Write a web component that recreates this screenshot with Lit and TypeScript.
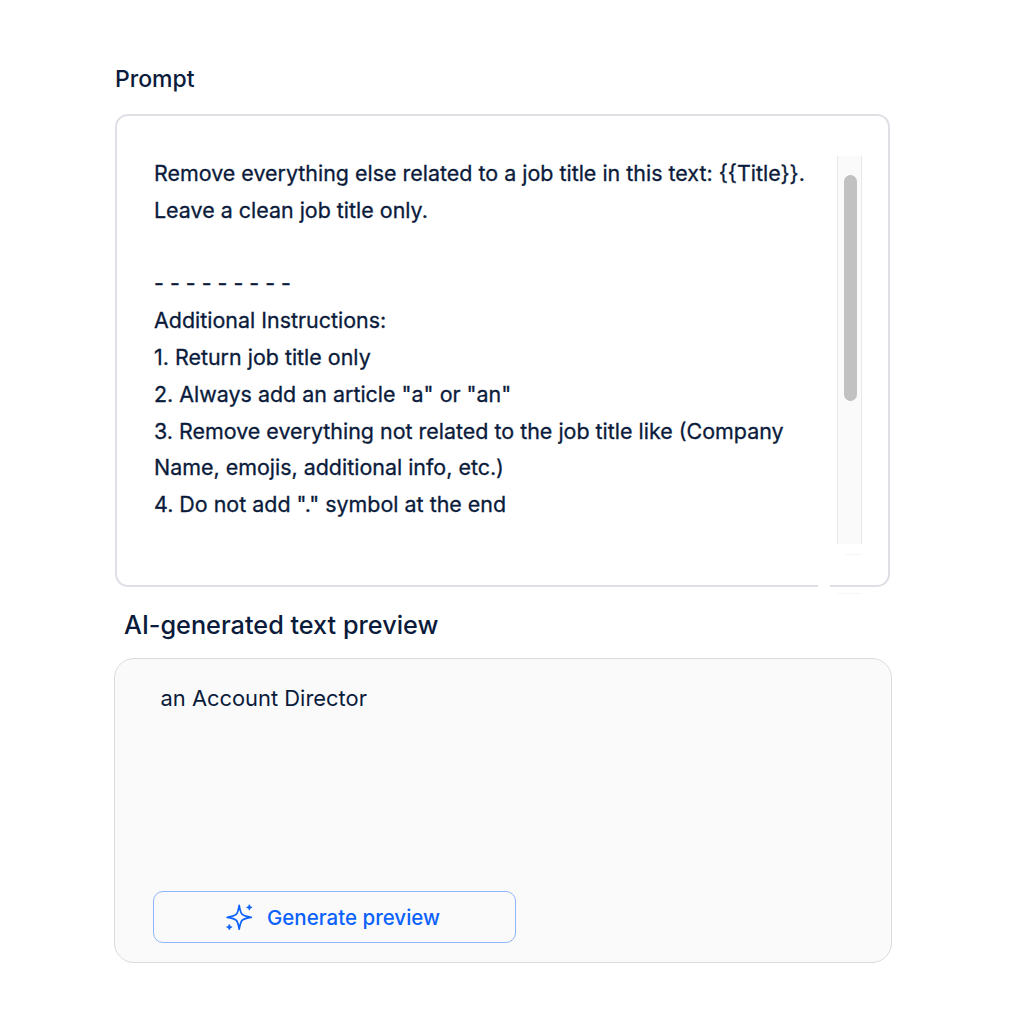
import { LitElement, html, css, svg } from "lit";
import { customElement } from "lit/decorators.js";

const LINES: string[] = [
  "Remove everything else related to a job title in this text: {{Title}}.",
  "Leave a clean job title only.",
  "",
  "- - - - - - - - -",
  "Additional Instructions:",
  "1. Return job title only",
  "2. Always add an article \"a\" or \"an\"",
  "3. Remove everything not related to the job title like (Company",
  "Name, emojis, additional info, etc.)",
  "4. Do not add \".\" symbol at the end",
];

const sparkles = svg`
  <path d="M13.2 1.4C13.9 5.6 14.5 8.4 16 10.2C17.7 11.9 20.6 12.7 25.2 13.3C20.6 13.9 17.7 14.7 16 16.4C14.5 18.2 13.9 21 13.2 25.2C12.5 21 11.9 18.2 10.4 16.4C8.7 14.7 5.8 13.9 1.2 13.3C5.8 12.7 8.7 11.9 10.4 10.2C11.9 8.4 12.5 5.6 13.2 1.4Z" fill="none" stroke="currentColor" stroke-width="1.7" stroke-linejoin="round"/>
  <path d="M23.3 .6L24.2 2.5L26.1 3.4L24.2 4.3L23.3 6.2L22.4 4.3L20.5 3.4L22.4 2.5ZM3.3 20.3L4.2 22.2L6.1 23.1L4.2 24L3.3 25.9L2.4 24L.5 23.1L2.4 22.2Z" fill="currentColor" stroke="currentColor" stroke-width=".6"/>`;

@customElement("app-root")
export class AppRoot extends LitElement {
  static styles = css`
    :host { display: block; box-sizing: border-box; width: 1024px; height: 1024px; padding: 61px 0 0 114px; background: #fff; color: #0b1b3b; font-family: Inter, sans-serif; overflow: hidden; }
    * { box-sizing: border-box; }
    .label { height: 53px; padding-left: 1px; line-height: 37px; font-size: 23px; font-weight: 500; }
    .prompt { position: relative; display: flex; justify-content: space-between; width: 775px; height: 473px; margin-left: 1px; padding: 40px 26px 0 37px; border: 2px solid #dfdfe6; border-radius: 13px; }
    .text { margin-top: -1px; }
    .line { height: 36.8px; line-height: 36.8px; font-size: 21.45px; -webkit-text-stroke: .3px currentColor; white-space: pre; }
    .track { width: 25px; height: 388px; padding: 19px 4px 0 6px; background: #fafafa; border: solid #e8e8e8; border-width: 0 1px; }
    .thumb { height: 226px; border-radius: 7px; background: #c1c1c1; }
    .gap { position: absolute; left: 701px; bottom: -2px; width: 12px; height: 2px; background: #fff; }
    .corner { position: absolute; right: 26px; bottom: -9px; width: 25px; height: 40px; border: solid #f6f6f6; border-width: 1px 0; }
    .corner::before { content: ""; position: absolute; inset: -1px auto auto 0; width: 8px; height: 1px; background: #fff; }
    .subtitle { height: 71px; padding: 19px 0 0 10px; line-height: 38px; font-size: 25.25px; font-weight: 500; }
    .result { display: flex; flex-direction: column; justify-content: space-between; align-items: flex-start; width: 778px; height: 305px; padding: 21px 38px 19px; border: 1px solid #d9dbe0; border-radius: 20px; background: #fafafa; }
    .answer { padding-left: 7.5px; line-height: 37px; font-size: 21.9px; }
    .generate { display: flex; align-items: center; justify-content: center; gap: 14px; width: 363px; height: 52px; padding: 0 3px 0 0; border: 1px solid #8fb5fc; border-radius: 10px; background: #fafafa; color: #0b61fb; font: 500 20.5px Inter, sans-serif; }
    .icon { flex: none; width: 27px; height: 27px; overflow: visible; }
  `;
  render() {
    return html`
      <div class="label">Prompt</div>
      <div class="prompt">
        <div class="text">${LINES.map((l) => html`<div class="line">${l}</div>`)}</div>
        <div class="track"><div class="thumb"></div></div>
        <span class="gap"></span>
        <span class="corner"></span>
      </div>
      <div class="subtitle">AI-generated text preview</div>
      <div class="result">
        <div class="answer">an Account Director</div>
        <button class="generate"><svg class="icon" viewBox="0 0 27 27">${sparkles}</svg>Generate preview</button>
      </div>`;
  }
}
